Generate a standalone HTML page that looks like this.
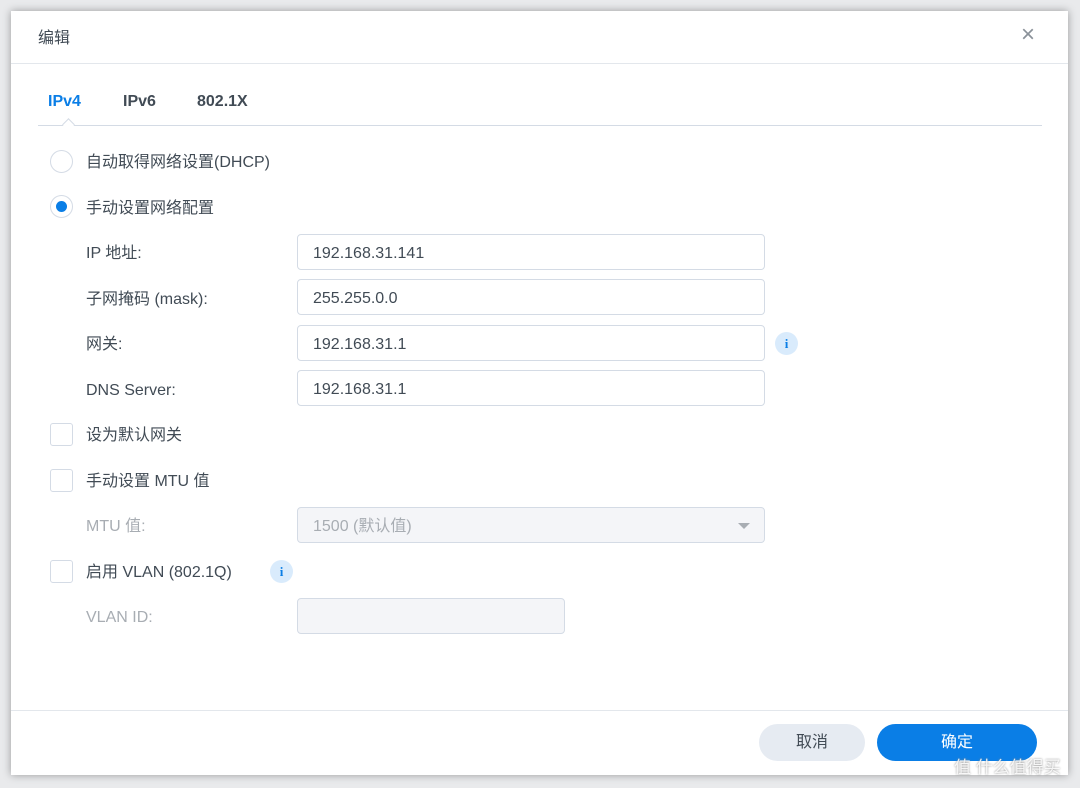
<!DOCTYPE html>
<html><head><meta charset="utf-8"><style>
body{margin:0;width:1080px;height:788px;background:#e9eaec;position:relative;overflow:hidden;font-family:"Liberation Sans","Noto Sans CJK SC",sans-serif;color:#414b55;}
.dlg{position:absolute;left:11px;top:11px;width:1057px;height:764px;background:#fff;box-shadow:0 0 8px rgba(0,0,0,.35);}
.a{position:absolute;}
.inp{position:absolute;left:286px;height:32px;padding-top:2px;border:1px solid #d4dbe5;border-radius:4px;font-size:16px;line-height:34px;padding-left:15px;width:451px;}
.dis{background:#f4f5f8;color:#a8adb3;}
.lab{position:absolute;left:75px;font-size:16px;line-height:20px;margin-top:2px;}
.gray{color:#a8adb3;}
.cb{position:absolute;left:39px;width:21px;height:21px;border:1px solid #d4dbe5;border-radius:3px;}
.rd{position:absolute;left:39px;width:21px;height:21px;border:1px solid #d4dbe5;border-radius:50%;}
.info{position:absolute;width:23px;height:23px;border-radius:50%;background:#d9ebfc;color:#0a7ee6;font:bold 13px "Liberation Serif",serif;text-align:center;line-height:23px;}
</style></head><body>
<div class="dlg">
<div class="a" style="left:27px;top:18px;color:#414b55;font-size:16px;line-height:20px">编辑</div>
<div class="a" style="left:1010px;top:10px;font-size:24px;color:#8a9199">×</div>
<div class="a" style="left:0;top:52px;width:1057px;height:1px;background:#e3e7ec"></div>
<div class="a" style="left:37px;top:81px;font-weight:bold;font-size:16px;line-height:20px;color:#0a7ee6">IPv4</div>
<div class="a" style="left:112px;top:81px;font-weight:bold;font-size:16px;line-height:20px;color:#414b55">IPv6</div>
<div class="a" style="left:186px;top:81px;font-weight:bold;font-size:16px;line-height:20px;color:#414b55">802.1X</div>
<div class="a" style="left:27px;top:114px;width:1004px;height:1px;background:#d4dbe5"></div>
<div class="a" style="left:53px;top:109px;width:8px;height:8px;background:#fff;border-left:1px solid #d4dbe5;border-top:1px solid #d4dbe5;transform:rotate(45deg)"></div>
<div class="rd" style="top:139px"></div>
<div class="lab" style="top:140px">自动取得网络设置(DHCP)</div>
<div class="rd" style="top:184px"><div class="a" style="left:5px;top:5px;width:11px;height:11px;border-radius:50%;background:#0a7ee6"></div></div>
<div class="lab" style="top:186px">手动设置网络配置</div>
<div class="lab" style="top:231px">IP 地址:</div><div class="inp" style="top:223px">192.168.31.141</div>
<div class="lab" style="top:277px">子网掩码 (mask):</div><div class="inp" style="top:268px">255.255.0.0</div>
<div class="lab" style="top:322px">网关:</div><div class="inp" style="top:314px">192.168.31.1</div>
<div class="info" style="left:764px;top:321px">i</div>
<div class="lab" style="top:368px">DNS Server:</div><div class="inp" style="top:359px">192.168.31.1</div>
<div class="cb" style="top:412px"></div><div class="lab" style="top:413px">设为默认网关</div>
<div class="cb" style="top:458px"></div><div class="lab" style="top:459px">手动设置 MTU 值</div>
<div class="lab gray" style="top:504px">MTU 值:</div>
<div class="inp dis" style="top:496px">1500 (默认值)<div class="a" style="right:14px;top:15px;border-left:6px solid transparent;border-right:6px solid transparent;border-top:6px solid #a8adb3"></div></div>
<div class="cb" style="top:549px"></div><div class="lab" style="top:550px">启用 VLAN (802.1Q)</div>
<div class="info" style="left:259px;top:549px">i</div>
<div class="lab gray" style="top:595px">VLAN ID:</div>
<div class="inp dis" style="top:587px;width:251px"></div>
<div class="a" style="left:0;top:699px;width:1057px;height:1px;background:#e3e7ec"></div>
<div class="a" style="left:748px;top:713px;width:106px;height:37px;border-radius:19px;background:#e6ebf2;text-align:center;line-height:37px;font-size:16px">取消</div>
<div class="a" style="left:866px;top:713px;width:160px;height:37px;border-radius:19px;background:#0a7ee6;color:#fff;text-align:center;line-height:37px;font-size:16px">确定</div>
<div class="a" style="left:943px;top:742px;font-size:17px;color:rgba(255,255,255,.85);text-shadow:0 0 2px #888">值 什么值得买</div>
</div>
</body></html>
